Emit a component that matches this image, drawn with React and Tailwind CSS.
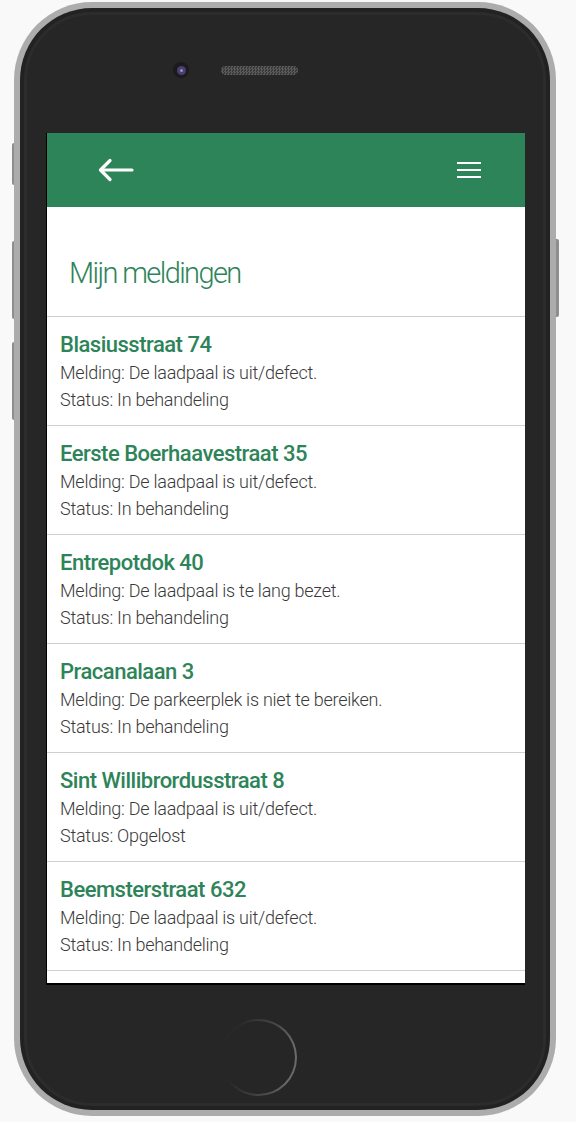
import React from "react";

const rows = [
  ["Blasiusstraat 74", "Melding: De laadpaal is uit/defect.", "Status: In behandeling"],
  ["Eerste Boerhaavestraat 35", "Melding: De laadpaal is uit/defect.", "Status: In behandeling"],
  ["Entrepotdok 40", "Melding: De laadpaal is te lang bezet.", "Status: In behandeling"],
  ["Pracanalaan 3", "Melding: De parkeerplek is niet te bereiken.", "Status: In behandeling"],
  ["Sint Willibrordusstraat 8", "Melding: De laadpaal is uit/defect.", "Status: Opgelost"],
  ["Beemsterstraat 632", "Melding: De laadpaal is uit/defect.", "Status: In behandeling"],
];

const font = { fontFamily: 'Roboto, "Liberation Sans", sans-serif' };

export default function App() {
  return (
    <div className="relative w-[576px] h-[1122px] bg-[#f9f9f9] overflow-hidden" style={font}>
      {/* side buttons */}
      <div className="absolute left-[12px] top-[143px] w-[4px] h-[42px] rounded-l-[2px] bg-[#8e8e8e]" />
      <div className="absolute left-[12px] top-[241px] w-[4px] h-[78px] rounded-l-[2px] bg-[#8e8e8e]" />
      <div className="absolute left-[12px] top-[342px] w-[4px] h-[78px] rounded-l-[2px] bg-[#8e8e8e]" />
      <div className="absolute left-[555px] top-[239px] w-[4px] h-[78px] rounded-r-[2px] bg-[#8e8e8e]" />

      {/* phone */}
      <div className="relative ml-[14px] mt-[2px] w-[542px] h-[1114px] rounded-[78px] bg-[#acacac] p-[6px]">
        <div className="w-full h-full rounded-[72px] bg-[#222222] p-[4px]">
          <div className="w-full h-full rounded-[68px] bg-[#262626] border-[3px] border-[#2c2c2c] flex flex-col">
            {/* top bezel */}
            <div className="h-[118px] flex items-start">
              <div className="ml-[146px] mt-[47px] w-[16px] h-[16px] rounded-full bg-[#1b1b1b] flex items-center justify-center">
                <div className="w-[9px] h-[9px] rounded-full bg-[#4b3f72] flex items-center justify-center">
                  <div className="w-[3px] h-[3px] rounded-full bg-[#9a90c0]" />
                </div>
              </div>
              <div className="ml-[32px] mt-[51px] w-[77px] h-[9px] rounded-full bg-[repeating-conic-gradient(#5a5a5a_0_25%,#383838_0_50%)] bg-[length:3px_3px]" />
            </div>
            {/* screen */}
            <div className="ml-[19px] w-[479px] h-[852px] border-l border-b-2 border-black bg-white overflow-hidden flex flex-col">
              <div className="h-[74px] shrink-0 bg-[#2e8459] flex items-center justify-between pl-[51px] pr-[44px]">
                <svg width="36" height="24" viewBox="0 0 36 24" fill="none" stroke="white" strokeWidth="3.2" strokeLinecap="round" strokeLinejoin="round">
                  <path d="M34 12H3" />
                  <path d="M12 2.5L2.5 12L12 21.5" />
                </svg>
                <div className="flex flex-col gap-[4.7px] w-[24px]">
                  <div className="h-[2.4px] bg-white" />
                  <div className="h-[2.4px] bg-white" />
                  <div className="h-[2.4px] bg-white" />
                </div>
              </div>
              <div className="h-[109px] shrink-0 pt-[48px] pl-[22px]">
                <div className="text-[29px] leading-[36px] font-light tracking-[-1.6px] text-[#2e8459]">Mijn meldingen</div>
              </div>
              {rows.map(([t, m, s]) => (
                <div key={t} className="h-[109px] shrink-0 border-t border-[#cfcfcf] pl-[13px] pt-[13px]">
                  <div className="text-[22px] leading-[30px] font-medium tracking-[-0.5px] text-[#2e8459]">{t}</div>
                  <div className="mt-[1px] text-[18px] leading-[24px] font-light tracking-[-0.25px] text-[#3a3a3a]">{m}</div>
                  <div className="mt-[3px] text-[18px] leading-[24px] font-light tracking-[-0.25px] text-[#3a3a3a]">{s}</div>
                </div>
              ))}
              <div className="border-t border-[#cfcfcf]" />
            </div>
            {/* bottom bezel */}
            <div className="flex-1 relative">
              <div className="absolute left-[193px] top-[34px] w-[77px] h-[77px] rounded-full p-[2px] bg-[conic-gradient(from_270deg,#262626_0deg,#2a2a2a_60deg,#444444_110deg,#6a6a6a_160deg,#6a6a6a_220deg,#4a4a4a_260deg,#282828_320deg,#262626_360deg)]">
                <div className="w-full h-full rounded-full bg-[#262626]" />
              </div>
            </div>
          </div>
        </div>
      </div>
    </div>
  );
}
